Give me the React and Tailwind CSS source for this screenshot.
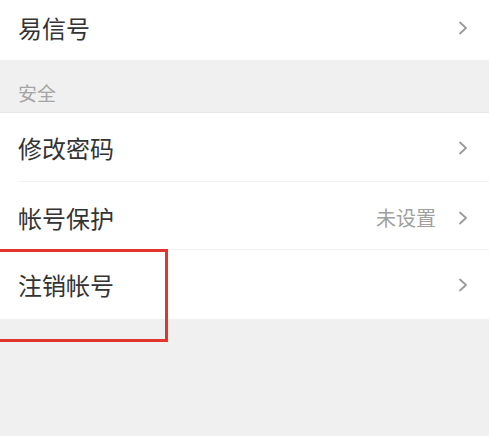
import React from "react";

const Chevron = () => (
  <svg width="10" height="14" viewBox="0 0 10 14" className="shrink-0">
    <polyline points="2,1.5 8,7 2,12.5" fill="none" stroke="#9a9a9a" strokeWidth="1.8" strokeLinecap="round" strokeLinejoin="round" />
  </svg>
);

const Row = ({ label, value, h, border }) => (
  <div className={`flex items-center bg-white pl-[18px] pr-[21px] ${h} relative`}>
    <span className="flex-1 text-[24px] text-[#333] leading-none">{label}</span>
    {value && <span className="text-[20px] text-[#a0a0a0] mr-[22px] leading-none">{value}</span>}
    <Chevron />
    {border && <div className="absolute left-[18px] right-0 bottom-0 h-px bg-[#f3f3f3]" />}
  </div>
);

export default function App() {
  return (
    <div className="relative w-[489px] h-[436px] bg-[#f0f0f0] overflow-hidden" style={{ fontFamily: '"Noto Sans CJK SC", "Noto Sans", sans-serif' }}>
      <Row label="易信号" h="h-[60px] pb-[4px]" />
      <div className="h-[52px] flex items-center pl-[18px] pt-[12px]">
        <span className="text-[19px] text-[#a5a5a5] leading-none">安全</span>
      </div>
      <div className="h-px bg-[#e8e8e8]" />
      <Row label="修改密码" h="h-[69px]" border />
      <Row label="帐号保护" value="未设置" h="h-[68px] pt-[3px]" border />
      <Row label="注销帐号" h="h-[69px]" />
      <div className="absolute left-[-10px] top-[249px] w-[178px] h-[93px] border-[3px] border-[#e2352b]" />
    </div>
  );
}
